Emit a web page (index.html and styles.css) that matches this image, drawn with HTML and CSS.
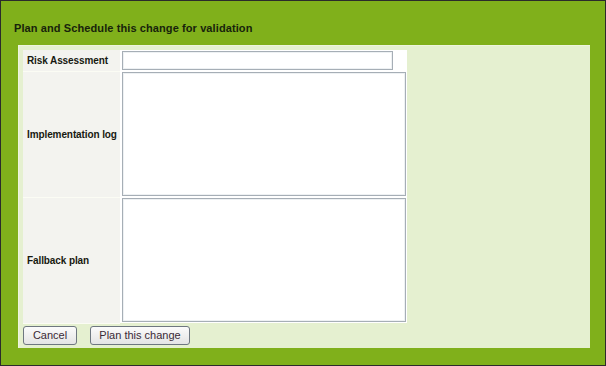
FILE: index.html
```html
<!DOCTYPE html>
<html>
<head>
  <title>Plan and Schedule</title>
  <link rel="stylesheet" href="styles.css">
</head>
<body>
  <div class="frame">
    <h1 class="title">Plan and Schedule this change for validation</h1>
    <div class="panel">
      <table class="form">
        <tr>
          <th>Risk Assessment</th>
          <td><input type="text" class="field"></td>
        </tr>
        <tr>
          <th>Implementation log</th>
          <td><textarea class="area"></textarea></td>
        </tr>
        <tr>
          <th>Fallback plan</th>
          <td><textarea class="area"></textarea></td>
        </tr>
      </table>
      <div class="actions">
        <button class="btn btn-cancel">Cancel</button>
        <button class="btn btn-plan">Plan this change</button>
      </div>
    </div>
  </div>
</body>
</html>
```

FILE: styles.css
```css
html, body {
  margin: 0;
  padding: 0;
  background: #ffffff;
}
.frame {
  box-sizing: border-box;
  width: 606px;
  height: 366px;
  border: 1px solid #2b2b2b;
  background: #80b01b;
  padding-top: 19px;
}
.title {
  margin: 0 0 9px 13px;
  font-family: "Liberation Sans", Arial, sans-serif;
  font-size: 11px;
  letter-spacing: 0.1px;
  font-weight: bold;
  line-height: 16px;
  color: #17230b;
}
.panel {
  box-sizing: border-box;
  margin-left: 17px;
  width: 572px;
  height: 303px;
  background: #e5f0d0;
  border-top: 1px solid #edf5dd;
  border-left: 1px solid #edf5dd;
  padding: 4px 4px;
}
.form {
  border-collapse: collapse;
}
.form th {
  width: 93px;
  padding: 0 0 0 4px;
  background: #f3f3ef;
  border-bottom: 1px solid #fbfcf4;
  text-align: left;
  font-family: "Liberation Sans", Arial, sans-serif;
  font-size: 10px;
  letter-spacing: -0.1px;
  font-weight: bold;
  color: #17190f;
}
.form td {
  padding: 1px 1px 1px 2px;
  background: #ffffff;
  vertical-align: top;
  line-height: 0;
}
.field {
  box-sizing: border-box;
  display: block;
  width: 271px;
  height: 19px;
  margin: 0;
  border: 1px solid #a6aeb6;
  box-shadow: inset 0 0 0 1px #eef1f3;
  padding: 0;
}
.area {
  box-sizing: border-box;
  display: block;
  width: 284px;
  height: 124px;
  margin: 0;
  border: 1px solid #a6aeb6;
  box-shadow: inset 0 0 0 1px #eef1f3;
  padding: 0;
  resize: none;
}
.actions {
  display: flex;
  gap: 13px;
  margin-top: 2px;
}
.btn {
  box-sizing: border-box;
  height: 19px;
  padding: 0;
  border: 1px solid #6e7780;
  border-radius: 3px;
  background: linear-gradient(#fbfbfb, #e4e4e4);
  font-family: "Liberation Sans", Arial, sans-serif;
  font-size: 11px;
  color: #3a2a36;
}
.btn-cancel {
  width: 54px;
}
.btn-plan {
  width: 100px;
}
```
